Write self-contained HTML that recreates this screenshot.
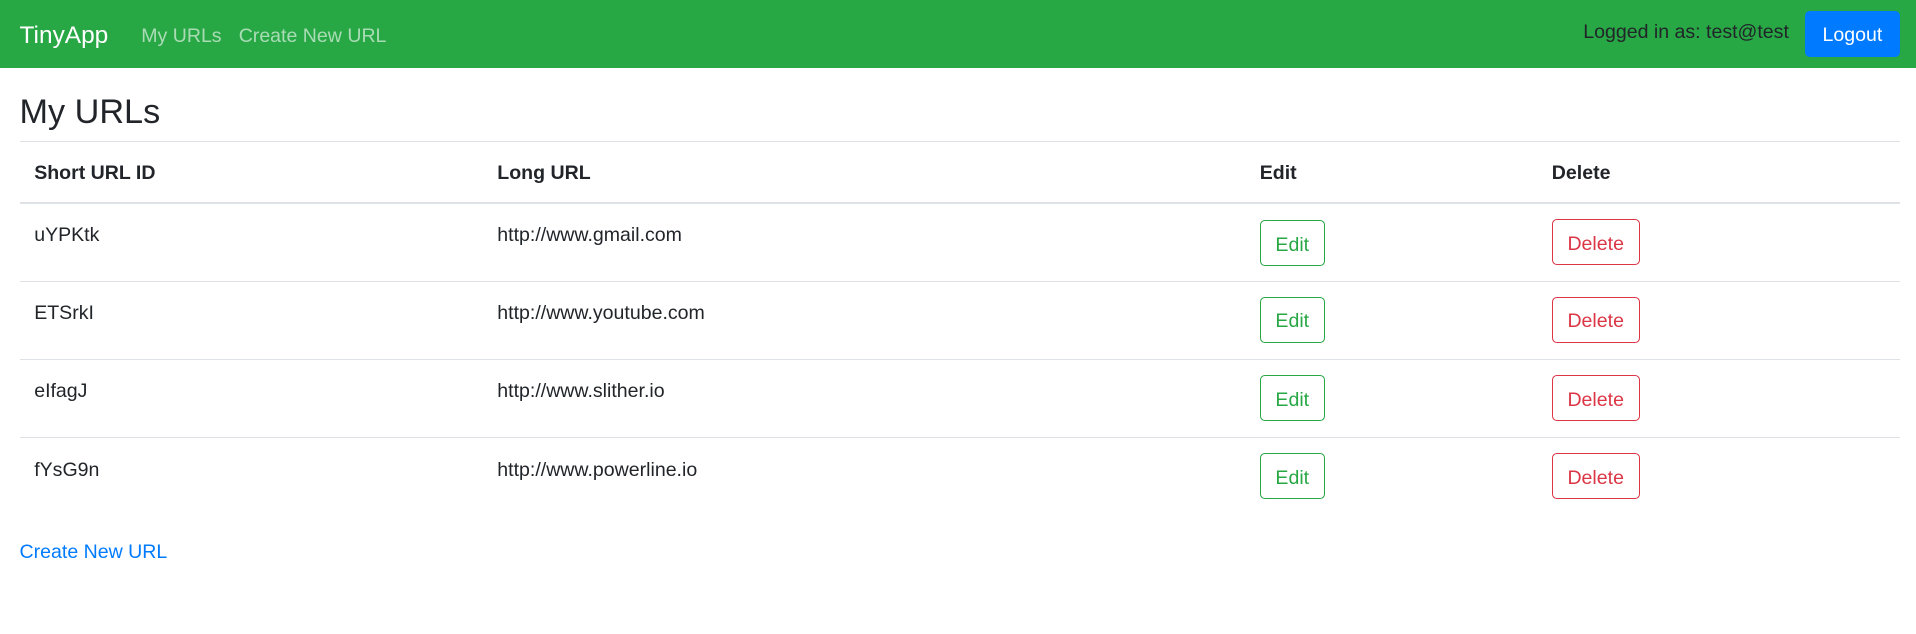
<!DOCTYPE html>
<html><head><meta charset="utf-8"><style>
html{zoom:1.2219}
*{box-sizing:border-box}
body{margin:0;font-family:"Liberation Sans",sans-serif;font-size:16px;line-height:1.5;color:#212529;background:#fff;width:1568px}
.nav{background:#28a745;height:56px;display:flex;align-items:center;padding:0 13px 0 16px}
.nav span,.nav a{position:relative;top:2px}
.brand{color:#fff;font-size:20px;margin-right:27px}
.nav a.l{color:rgba(255,255,255,.6);margin-right:14px;text-decoration:none}
.sp{flex:1}
.nav .who{color:#212529;margin-right:13px;top:-1px}
.nav .btnp{background:#007bff;color:#fff;border-radius:4px;padding:8px 12px 4px;height:38px;width:78px;text-align:center;top:0}
.main{padding:0 13px 0 16px}
h3{font-size:28px;font-weight:500;margin:19px 0 7px;line-height:1.2}
table{width:100%;border-collapse:collapse}
th,td{text-align:left;padding:14px 12px 10px;vertical-align:top;border-top:1px solid #dee2e6}
th{border-bottom:2px solid #dee2e6;font-weight:bold;padding:14px 12px 11px}
td{height:64px}
td.bt{padding:12px}
.b{display:inline-block;border:1px solid;border-radius:4px;padding:8px 12px 4px;height:38px;line-height:24px}
.e{color:#28a745;border-color:#28a745}
.d{color:#dc3545;border-color:#dc3545}
a.c{color:#007bff;text-decoration:none;display:block;margin-top:18px}
</style></head><body>
<div class="nav"><span class="brand">TinyApp</span><a class="l">My URLs</a><a class="l">Create New URL</a><span class="sp"></span><span class="who">Logged in as: test@test</span><span class="btnp">Logout</span></div>
<div class="main">
<h3>My URLs</h3>
<table>
<tr><th style="width:379px">Short URL ID</th><th style="width:624px">Long URL</th><th style="width:239px">Edit</th><th>Delete</th></tr>
<tr><td>uYPKtk</td><td>http://www.gmail.com</td><td class="bt"><span class="b e" style="margin-top:1px">Edit</span></td><td class="bt"><span class="b d">Delete</span></td></tr>
<tr><td>ETSrkI</td><td>http://www.youtube.com</td><td class="bt"><span class="b e">Edit</span></td><td class="bt"><span class="b d">Delete</span></td></tr>
<tr><td>eIfagJ</td><td>http://www.slither.io</td><td class="bt"><span class="b e">Edit</span></td><td class="bt"><span class="b d">Delete</span></td></tr>
<tr><td>fYsG9n</td><td>http://www.powerline.io</td><td class="bt"><span class="b e">Edit</span></td><td class="bt"><span class="b d">Delete</span></td></tr>
</table>
<a class="c">Create New URL</a>
</div>
</body></html>
